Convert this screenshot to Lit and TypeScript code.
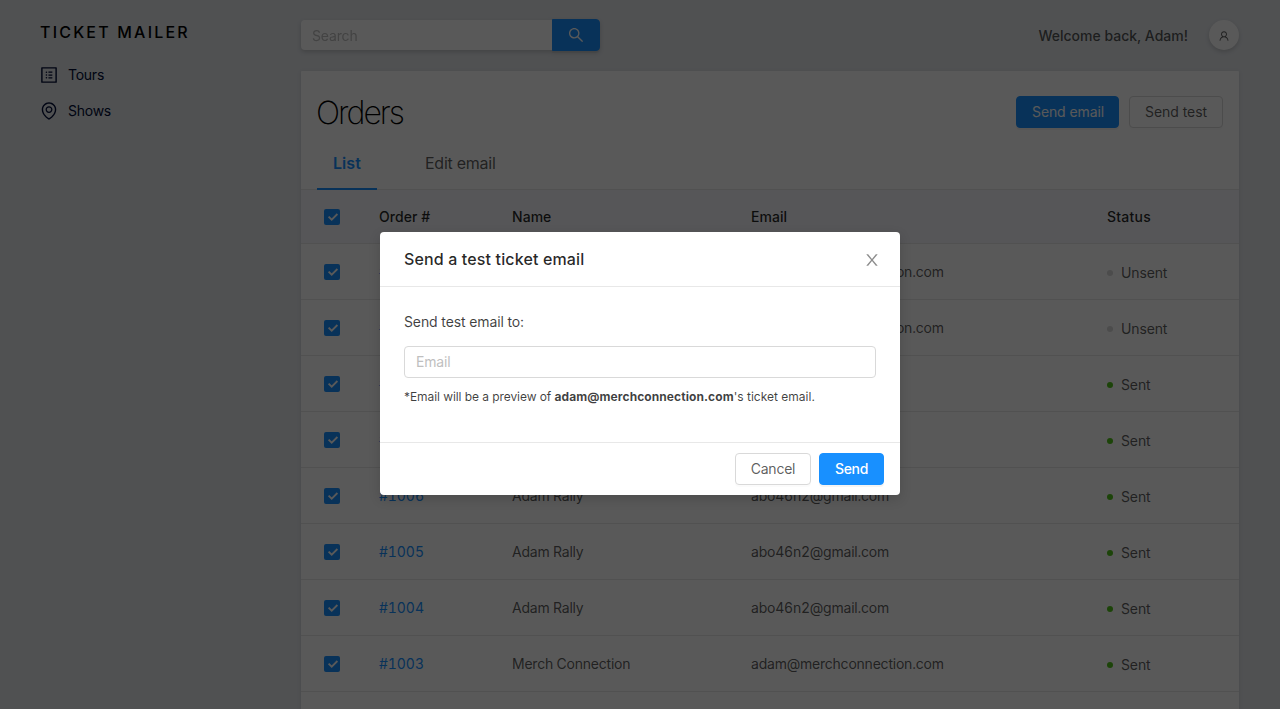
import { LitElement, html, css, svg } from "lit";
import { customElement } from "lit/decorators.js";
import { classMap } from "lit/directives/class-map.js";

interface Order {
  id: string;
  name: string;
  email: string;
  sent: boolean;
}

const MERCH = { name: "Merch Connection", email: "adam@merchconnection.com" };
const RALLY = { name: "Adam Rally", email: "abo46n2@gmail.com" };

const ORDERS: Order[] = [
  { id: "#1010", ...MERCH, sent: false },
  { id: "#1009", ...MERCH, sent: false },
  { id: "#1008", ...RALLY, sent: true },
  { id: "#1007", ...RALLY, sent: true },
  { id: "#1006", ...RALLY, sent: true },
  { id: "#1005", ...RALLY, sent: true },
  { id: "#1004", ...RALLY, sent: true },
  { id: "#1003", ...MERCH, sent: true },
];

const PATHS = {
  search:
    "M909.6 854.5L649.9 594.8C690.2 542.7 712 479 712 412c0-80.2-31.3-155.4-87.9-212.1-56.6-56.7-132-87.9-212.1-87.9s-155.5 31.3-212.1 87.9C143.2 256.5 112 331.8 112 412c0 80.1 31.3 155.5 87.9 212.1C256.5 680.8 331.8 712 412 712c67 0 130.6-21.8 182.7-62l259.7 259.6a8.2 8.2 0 0 0 11.6 0l43.6-43.5a8.2 8.2 0 0 0 0-11.6zM570.4 570.4C528 612.7 471.8 636 412 636s-116-23.3-158.4-65.6C211.3 528 188 471.8 188 412s23.3-116.1 65.6-158.4C296 211.3 352.2 188 412 188s116.1 23.2 158.4 65.6S636 352.2 636 412s-23.3 116.1-65.6 158.4z",
  profile:
    "M880 112H144c-17.7 0-32 14.3-32 32v736c0 17.7 14.3 32 32 32h736c17.7 0 32-14.3 32-32V144c0-17.7-14.3-32-32-32zm-40 728H184V184h656v656zM492 400h184c4.4 0 8-3.6 8-8v-48c0-4.4-3.6-8-8-8H492c-4.4 0-8 3.6-8 8v48c0 4.4 3.6 8 8 8zm0 144h184c4.4 0 8-3.6 8-8v-48c0-4.4-3.6-8-8-8H492c-4.4 0-8 3.6-8 8v48c0 4.4 3.6 8 8 8zm0 144h184c4.4 0 8-3.6 8-8v-48c0-4.4-3.6-8-8-8H492c-4.4 0-8 3.6-8 8v48c0 4.4 3.6 8 8 8zM340 368a40 40 0 1 0 80 0 40 40 0 1 0-80 0zm0 144a40 40 0 1 0 80 0 40 40 0 1 0-80 0zm0 144a40 40 0 1 0 80 0 40 40 0 1 0-80 0z",
  pin:
    "M854.6 289.1a362.49 362.49 0 0 0-79.9-115.7 370.83 370.83 0 0 0-118.2-77.8C610.7 76.6 562.1 67 512 67c-50.1 0-98.7 9.6-144.5 28.5-44.3 18.3-84 44.5-118.2 77.8A363.6 363.6 0 0 0 169.4 289c-19.5 45-29.4 92.8-29.4 142 0 70.6 16.9 140.9 50.1 208.7 26.7 54.5 64 107.6 111 158.1 80.3 86.2 164.5 138.9 188.4 153a43.9 43.9 0 0 0 22.4 6.1c7.8 0 15.5-2 22.4-6.1 23.9-14.1 108.1-66.8 188.4-153 47-50.4 84.3-103.6 111-158.1C867.1 572 884 501.8 884 431.1c0-49.2-9.9-97-29.4-142zM512 880.2c-65.9-41.9-300-207.8-300-449.1 0-77.9 31.1-151.1 87.6-206.3C356.3 169.5 431.7 139 512 139s155.7 30.5 212.4 85.9C780.9 280 812 353.2 812 431.1c0 241.3-234.1 407.2-300 449.1zm0-617.2c-97.2 0-176 78.8-176 176s78.8 176 176 176 176-78.8 176-176-78.8-176-176-176zm79.2 255.2A111.6 111.6 0 0 1 512 551c-29.9 0-58-11.7-79.2-32.8A111.6 111.6 0 0 1 400 439c0-29.9 11.7-58 32.8-79.2A111.6 111.6 0 0 1 512 327c29.9 0 58 11.6 79.2 32.8C612.4 381 624 409.1 624 439c0 29.9-11.6 58-32.8 79.2z",
  user:
    "M858.5 763.6a374 374 0 0 0-80.6-119.5 375.63 375.63 0 0 0-119.5-80.6c-.4-.2-.8-.3-1.2-.5C719.5 518 760 444.7 760 362c0-137-111-248-248-248S264 225 264 362c0 82.7 40.5 156 102.8 201.1-.4.2-.8.3-1.2.5-44.8 18.9-85 46-119.5 80.6a375.63 375.63 0 0 0-80.6 119.5A371.7 371.7 0 0 0 136 901.8a8 8 0 0 0 8 8.2h60c4.4 0 7.9-3.5 8-7.8 2-77.2 33-149.5 87.8-204.3 56.7-56.7 132-87.9 212.2-87.9s155.5 31.2 212.2 87.9C779 752.7 810 825 812 902.2c.1 4.4 3.6 7.8 8 7.8h60a8 8 0 0 0 8-8.2c-1-47.8-10.9-94.3-29.5-138.2zM512 534c-45.9 0-89.1-17.9-121.6-50.4S340 407.9 340 362c0-45.9 17.9-89.1 50.4-121.6S466.1 190 512 190s89.1 17.9 121.6 50.4S684 316.1 684 362c0 45.9-17.9 89.1-50.4 121.6S557.9 534 512 534z",
  close:
    "M563.8 512l262.5-312.9c4.4-5.2.7-13.1-6.1-13.1h-79.8c-4.7 0-9.2 2.1-12.3 5.7L511.6 449.8 295.1 191.7c-3-3.6-7.5-5.7-12.3-5.7H203c-6.8 0-10.5 7.9-6.1 13.1L459.4 512 196.9 824.9A7.95 7.95 0 0 0 203 838h79.8c4.7 0 9.2-2.1 12.3-5.7l216.5-258.1 216.5 258.1c3 3.6 7.5 5.7 12.3 5.7h79.8c6.8 0 10.5-7.9 6.1-13.1L563.8 512z",
};

const icon = (name: keyof typeof PATHS, size: number) => html`
  <svg width=${size} height=${size} viewBox="0 0 1024 1024" fill="currentColor" aria-hidden="true">
    ${svg`<path d=${PATHS[name]}></path>`}
  </svg>
`;

const checkbox = () => html`
  <span class="checkbox">
    <svg width="16" height="16" viewBox="0 0 16 16" fill="none" aria-hidden="true">
      <path d="M4.6 7.6L7.7 10.7L13.4 5" stroke="#fff" stroke-width="1.8"></path>
    </svg>
  </span>
`;

@customElement("app-root")
export class AppRoot extends LitElement {
  static styles = css`
    :host {
      display: block;
      height: 709px;
      overflow: hidden;
      position: relative;
      font: 400 14px/22px Inter, "Liberation Sans", sans-serif;
      color: rgba(0, 0, 0, 0.65);
      background: #e4e7eb;
    }
    * { box-sizing: border-box; }
    svg { display: block; flex: none; }
    button {
      font: inherit;
      height: 32px;
      padding: 0;
      border: 1px solid #d9d9d9;
      border-radius: 4px;
      background: #fff;
      color: inherit;
      box-shadow: 0 2px 0 rgba(0, 0, 0, 0.015);
      display: flex;
      align-items: center;
      justify-content: center;
    }
    button.primary {
      background: #1890ff;
      border-color: #1890ff;
      color: #fff;
      box-shadow: 0 2px 0 rgba(0, 0, 0, 0.045);
    }
    input {
      font: inherit;
      height: 32px;
      padding: 0 11px;
      border: 1px solid #d9d9d9;
      border-radius: 4px;
      background: #fff;
      outline: none;
      letter-spacing: -0.16px;
    }
    input::placeholder { color: #bfbfbf; opacity: 1; }

    .layout { display: flex; }
    .sidebar { width: 301px; flex: none; padding: 21px 0 0 40px; }
    .brand {
      font-size: 16px;
      font-weight: 500;
      letter-spacing: 2.2px;
      color: #000;
      margin-bottom: 14px;
    }
    .nav-item {
      display: flex;
      align-items: center;
      gap: 10px;
      height: 36px;
      color: #000c36;
      letter-spacing: -0.25px;
    }
    .nav-item svg { margin-left: -1px; margin-right: -1px; }

    .main { width: 938px; flex: none; }
    .topbar {
      display: flex;
      align-items: center;
      padding: 19px 0 20px;
    }
    .search {
      display: flex;
      width: 299px;
      border-radius: 4px;
      filter: drop-shadow(0 2px 2px rgba(0, 0, 0, 0.16));
    }
    .search input {
      flex: 1;
      min-width: 0;
      height: 30px;
      margin: 1px 0;
      border: 0;
      border-radius: 4px 0 0 4px;
    }
    .search button { width: 48px; border-radius: 0 4px 4px 0; }
    .welcome { margin-left: auto; padding-top: 2px; font-weight: 500; }
    .avatar {
      width: 30px;
      height: 30px;
      margin-left: 21px;
      padding-top: 2px;
      border-radius: 50%;
      background: #fff;
      display: flex;
      align-items: center;
      justify-content: center;
      box-shadow: 0 2px 4px rgba(0, 0, 0, 0.16);
    }
    .card {
      height: 700px;
      background: #fff;
      border-radius: 1px;
      box-shadow: 0 1px 4px rgba(0, 0, 0, 0.1);
    }
    .card-head {
      display: flex;
      align-items: center;
      gap: 10px;
      padding: 21px 16px 17px 15px;
    }
    h1 {
      margin: 0 auto 0 0;
      padding-top: 1px;
      font-size: 32px;
      line-height: 39px;
      font-weight: 200;
      letter-spacing: -2px;
      color: #000;
    }
    .send-email { width: 103px; padding-left: 1px; letter-spacing: -0.1px; }
    .send-test { width: 94px; letter-spacing: -0.06px; }
    .tabs {
      display: flex;
      gap: 32px;
      height: 41px;
      padding: 0 16px;
      border-bottom: 1px solid #e8e8e8;
      font-size: 16px;
      line-height: 24px;
      letter-spacing: -0.25px;
    }
    .tab { padding: 2px 16px 0; height: 41px; }
    .tab.active {
      width: 60px;
      color: #1890ff;
      font-weight: 600;
      letter-spacing: 0.05px;
      border-bottom: 2px solid #1890ff;
    }
    .row {
      display: grid;
      grid-template-columns: 62px 133px 239px 356px 1fr;
      align-items: center;
      height: 56px;
      border-bottom: 1px solid #e8e8e8;
      letter-spacing: -0.22px;
      font-variant-numeric: tabular-nums;
    }
    .row > * { padding: 0 0 0 16px; }
    .row > .check { padding: 0; display: flex; justify-content: center; }
    .row.header {
      height: 54px;
      background: #f5f7fb;
      color: rgba(0, 0, 0, 0.85);
      font-weight: 500;
      letter-spacing: 0.05px;
    }
    .row.header span:last-child { letter-spacing: 0.24px; }
    .checkbox {
      width: 16px;
      height: 16px;
      border-radius: 2px;
      background: #1890ff;
    }
    .row > .link { color: #1890ff; letter-spacing: -0.05px; }
    .row > .status {
      display: flex;
      align-items: center;
      gap: 8px;
      letter-spacing: -0.13px;
      margin-top: 2px;
    }
    .dot { width: 6px; height: 6px; border-radius: 50%; background: #d9d9d9; }
    .dot.sent { background: #52c41a; }

    .mask {
      position: absolute;
      inset: 0;
      background: rgba(0, 0, 0, 0.65);
      display: flex;
      justify-content: center;
      align-items: flex-start;
      padding-top: 232px;
    }
    .modal {
      width: 520px;
      border-radius: 4px;
      background: #fff;
      box-shadow: 0 4px 12px rgba(0, 0, 0, 0.15);
    }
    .modal-head {
      display: flex;
      align-items: center;
      justify-content: space-between;
      height: 55px;
      padding: 0 19px 0 24px;
      border-bottom: 1px solid #e8e8e8;
      font-size: 16px;
      font-weight: 500;
      letter-spacing: 0.14px;
      color: rgba(0, 0, 0, 0.85);
    }
    .modal-head svg { color: rgba(0, 0, 0, 0.45); margin-top: 1px; }
    .modal-body {
      display: flex;
      flex-direction: column;
      height: 155px;
      padding: 24px;
      color: rgba(0, 0, 0, 0.75);
    }
    .modal-body input { padding-bottom: 2px; }
    .label { letter-spacing: -0.12px; margin-bottom: 13px; }
    .note { font-size: 12px; line-height: 20px; margin-top: 9px; letter-spacing: -0.07px; }
    .note b { font-weight: 700; letter-spacing: 0.08px; }
    .note .tail { letter-spacing: 0; }
    .modal-foot {
      display: flex;
      justify-content: flex-end;
      gap: 8px;
      padding: 10px 16px;
      border-top: 1px solid #e8e8e8;
    }
    .cancel { width: 76px; letter-spacing: -0.25px; }
    .send { width: 65px; font-weight: 500; letter-spacing: -0.3px; }
  `;

  private renderOrder(o: Order) {
    return html`
      <div class="row">
        <span class="check">${checkbox()}</span>
        <span class="link">${o.id}</span>
        <span>${o.name}</span>
        <span>${o.email}</span>
        <span class="status">
          <i class=${classMap({ dot: true, sent: o.sent })}></i>${o.sent ? "Sent" : "Unsent"}
        </span>
      </div>
    `;
  }

  render() {
    return html`
      <div class="layout">
        <nav class="sidebar">
          <div class="brand">TICKET MAILER</div>
          <div class="nav-item">${icon("profile", 20)}<span>Tours</span></div>
          <div class="nav-item">${icon("pin", 20)}<span>Shows</span></div>
        </nav>
        <main class="main">
          <header class="topbar">
            <div class="search">
              <input placeholder="Search" />
              <button class="primary" aria-label="Search">${icon("search", 18)}</button>
            </div>
            <span class="welcome">Welcome back, Adam!</span>
            <span class="avatar">${icon("user", 12)}</span>
          </header>
          <section class="card">
            <div class="card-head">
              <h1>Orders</h1>
              <button class="primary send-email">Send email</button>
              <button class="send-test">Send test</button>
            </div>
            <div class="tabs">
              <div class="tab active">List</div>
              <div class="tab">Edit email</div>
            </div>
            <div class="row header">
              <span class="check">${checkbox()}</span>
              <span>Order #</span>
              <span>Name</span>
              <span>Email</span>
              <span>Status</span>
            </div>
            ${ORDERS.map((o) => this.renderOrder(o))}
          </section>
        </main>
      </div>
      <div class="mask">
        <div class="modal" role="dialog">
          <div class="modal-head"><span>Send a test ticket email</span>${icon("close", 18)}</div>
          <div class="modal-body">
            <div class="label">Send test email to:</div>
            <input placeholder="Email" />
            <div class="note">*Email will be a preview of <b>adam@merchconnection.com</b><span class="tail">'s ticket email.</span></div>
          </div>
          <div class="modal-foot">
            <button class="cancel">Cancel</button>
            <button class="primary send">Send</button>
          </div>
        </div>
      </div>
    `;
  }
}
